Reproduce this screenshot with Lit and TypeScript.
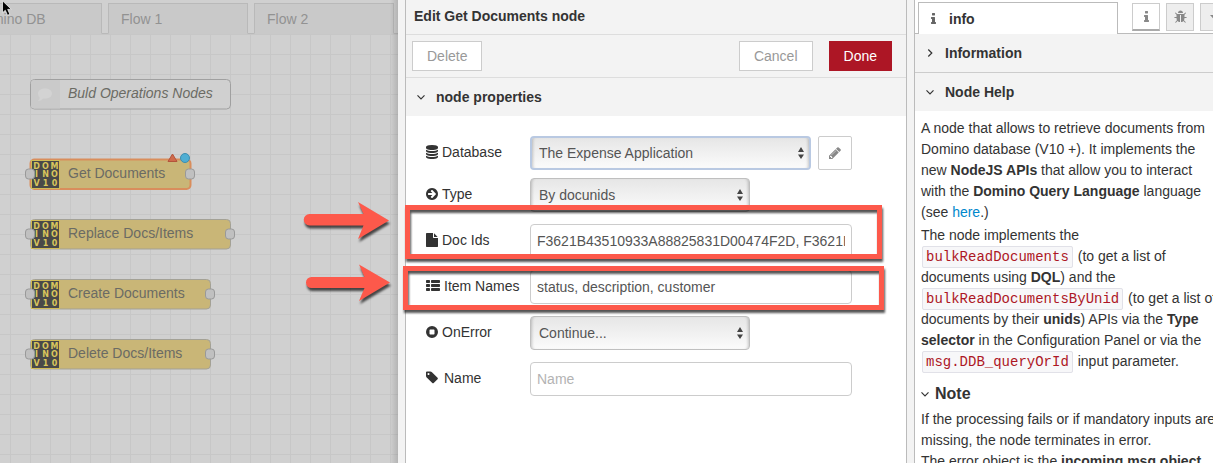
import { LitElement, html, css, svg } from "lit";
import { customElement } from "lit/decorators.js";

const ICONS: Record<string, { w: number; h: number; vb: string; body: unknown }> = {
  database: {
    w: 12, h: 14, vb: "0 0 1536 1792",
    body: svg`<path d="M768 768q237 0 443-43t325-127v170q0 69-103 128t-280 93.5-385 34.5-385-34.5-280-93.5-103-128v-170q119 84 325 127t443 43zm0 768q237 0 443-43t325-127v170q0 69-103 128t-280 93.5-385 34.5-385-34.5-280-93.5-103-128v-170q119 84 325 127t443 43zm0-384q237 0 443-43t325-127v170q0 69-103 128t-280 93.5-385 34.5-385-34.5-280-93.5-103-128v-170q119 84 325 127t443 43zm0-1152q208 0 385 34.5t280 93.5 103 128v128q0 69-103 128t-280 93.5-385 34.5-385-34.5-280-93.5-103-128v-128q0-69 103-128t280-93.5 385-34.5z"/>`,
  },
  arrow: {
    w: 12, h: 14, vb: "0 0 1536 1792",
    body: svg`<path d="M1285 896q0-27-18-45l-91-91-362-362q-18-18-45-18t-45 18l-91 91q-18 18-18 45t18 45l189 189h-502q-26 0-45 19t-19 45v128q0 26 19 45t45 19h502l-189 189q-19 19-19 45t19 45l91 91q18 18 45 18t45-18l362-362 91-91q18-18 18-45zm251 0q0 209-103 385.5t-279.5 279.5-385.5 103-385.5-103-279.5-279.5-103-385.5 103-385.5 279.5-279.5 385.5-103 385.5 103 279.5 279.5 103 385.5z"/>`,
  },
  file: {
    w: 12, h: 14, vb: "128 0 1536 1792",
    body: svg`<path d="M1152 512v-472q22 14 36 28l408 408q14 14 28 36h-472zm-128 32q0 40 28 68t68 28h544v1056q0 40-28 68t-68 28h-1344q-40 0-68-28t-28-68v-1600q0-40 28-68t68-28h800v544z"/>`,
  },
  list: {
    w: 14, h: 14, vb: "0 0 14 14",
    body: svg`
      <rect x="0" y="1" width="4" height="3" rx=".7"/><rect x="5" y="1" width="9" height="3" rx=".7"/>
      <rect x="0" y="5" width="4" height="3" rx=".7"/><rect x="5" y="5" width="9" height="3" rx=".7"/>
      <rect x="0" y="9" width="4" height="3" rx=".7"/><rect x="5" y="9" width="9" height="3" rx=".7"/>`,
  },
  stop: {
    w: 12, h: 14, vb: "0 0 12 14",
    body: svg`<path fill-rule="evenodd" d="M6 1a6 6 0 1 1 0 12A6 6 0 0 1 6 1zM4.200 4.500q-.7 0-.7.7v3.600q0 .7.7.7h3.600q.7 0 .7-.7V5.200q0-.7-.7-.7z"/>`,
  },
  tag: {
    w: 12, h: 14, vb: "0 64 1536 1792",
    body: svg`<path d="M448 448q0-53-37.500-90.500t-90.500-37.500-90.500 37.500-37.500 90.500 37.500 90.500 90.500 37.500 90.500-37.500 37.500-90.500zm1067 576q0 53-37 90l-491 492q-39 37-91 37-53 0-90-37l-715-716q-38-37-64.500-101t-26.500-117v-416q0-52 38-90t90-38h416q53 0 117 26.500t102 64.500l715 714q37 39 37 91z"/>`,
  },
  pencil: {
    w: 12, h: 14, vb: "0 0 1536 1792",
    body: svg`<path d="M363 1536l91-91-235-235-91 91v107h128v128h107zm523-928q0-22-22-22-10 0-17 7l-542 542q-7 7-7 17 0 22 22 22 10 0 17-7l542-542q7-7 7-17zm-54-192l416 416-832 832h-416v-416zm683 96q0 53-37 90l-166 166-416-416 166-165q36-38 90-38 53 0 91 38l235 234q37 39 37 91z"/>`,
  },
  info: {
    w: 5, h: 14, vb: "0 0 640 1792",
    body: svg`<path d="M640 1344v128q0 26-19 45t-45 19h-512q-26 0-45-19t-19-45v-128q0-26 19-45t45-19h64v-384h-64q-26 0-45-19t-19-45v-128q0-26 19-45t45-19h384q26 0 45 19t19 45v576h64q26 0 45 19t19 45zm-128-1152v192q0 26-19 45t-45 19h-256q-26 0-45-19t-19-45v-192q0-26 19-45t45-19h256q26 0 45 19t19 45z"/>`,
  },
  bug: {
    w: 13, h: 14, vb: "0 0 1664 1792",
    body: svg`<path d="M1632 960q0 26-19 45t-45 19h-224q0 171-67 290l208 209q19 19 19 45t-19 45q-18 19-45 19t-45-19l-198-197q-5 5-15 13t-42 28.500-65 36.500-82 29-97 13v-896h-128v896q-51 0-101.500-13.500t-87-33-66-39-43.500-32.500l-15-14-183 207q-20 21-48 21-24 0-43-16-19-18-20.500-44.500t15.500-46.500l202-227q-58-114-58-274h-224q-26 0-45-19t-19-45 19-45 45-19h224v-294l-173-173q-19-19-19-45t19-45 45-19 45 19l173 173h844l173-173q19-19 45-19t45 19 19 45-19 45l-173 173v294h224q26 0 45 19t19 45zm-480-576h-640q0-133 93.500-226.500t226.500-93.500 226.500 93.500 93.500 226.500z"/>`,
  },
  down: {
    w: 8, h: 8, vb: "0 0 8 8",
    body: svg`<path d="M.5 2.300 4 5.800 7.500 2.300" fill="none" stroke="currentColor" stroke-width="1.200"/>`,
  },
  right: {
    w: 8, h: 8, vb: "0 0 8 8",
    body: svg`<path d="M2.300 .5 5.800 4 2.300 7.500" fill="none" stroke="currentColor" stroke-width="1.200"/>`,
  },
  caret: {
    w: 9, h: 5, vb: "0 0 9 5",
    body: svg`<path d="M0 0h9L4.500 5z"/>`,
  },
  updown: {
    w: 6, h: 12, vb: "0 0 6 12",
    body: svg`<path d="M3 0 6 5H0zM3 12 0 7.500h6z"/>`,
  },
};

const icon = (name: string) => {
  const i = ICONS[name];
  return html`<svg class="icon" width=${i.w} height=${i.h} viewBox=${i.vb} fill="currentColor" aria-hidden="true">${i.body}</svg>`;
};

const shared = css`
  * { box-sizing: border-box; }
  .icon { display: block; flex: none; }
  button { font: inherit; cursor: pointer; }
  .section {
    display: flex; align-items: center; gap: 11px; width: 100%; height: 38px;
    padding: 0 0 0 11px; border: 0; background: #f3f3f3; color: #333;
    font-weight: bold; text-align: left;
  }
`;

interface FlowNode { label: string; x: number; y: number; width: number; selected?: boolean; }

@customElement("flow-workspace")
export class FlowWorkspace extends LitElement {
  static styles = [shared, css`
    :host { display: flex; flex-direction: column; position: relative; overflow: hidden; background: #d0d0d0; }
    .tabs { display: flex; gap: 6px; height: 34px; padding-top: 3px; margin-left: -39px; color: #929292; flex: none;
      background: linear-gradient(#b9b9b9, #b9b9b9) 0 33px / 100% 1px no-repeat; }
    .tab { flex: none; width: 140px; padding: 0 0 0 12px; border: 1px solid #b9b9b9; border-bottom-color: #c9c9c9;
      background: #c9c9c9; color: inherit; text-align: left; }
    .tab:first-child { width: 141px; }
    .canvas { flex: 1; width: 100%; min-height: 0; display: block; }
    .canvas text { font-size: 14px; fill: #6b6b64; }
    .canvas .letters { font-size: 8px; font-weight: bold; fill: #d8c55c; text-anchor: middle; font-family: "DejaVu Sans", sans-serif; }
    .comment { font-style: italic; }
    .shade { position: absolute; top: 0; right: 0; bottom: 0; width: 8px; background: linear-gradient(to right, #0000, #0002); }
    .pointer { position: absolute; left: 1px; top: 0; }
  `];

  nodes: FlowNode[] = [
    { label: "Get Documents", x: 30, y: 125, width: 160, selected: true },
    { label: "Replace Docs/Items", x: 30, y: 185, width: 200 },
    { label: "Create Documents", x: 30, y: 245, width: 180 },
    { label: "Delete Docs/Items", x: 30, y: 305, width: 180 },
  ];

  node(n: FlowNode) {
    const port = (x: number) => svg`<rect x=${x} y="10" width="9" height="10" rx="3" fill="#c0c0c0" stroke="#999"/>`;
    return svg`<g transform="translate(${n.x} ${n.y})">
      <rect x=".5" y=".5" width=${n.width} height="29.500" rx="4" fill="#c9b677" stroke=${n.selected ? "#d98d5c" : "#a3a196"} stroke-width=${n.selected ? 2 : 1}/>
      <rect x="1" y="1" width="29" height="29" fill="#d0bb55"/>
      <rect x="2" y="2" width="27" height="27" fill="#494949"/>
      <text class="letters" x="6.500 15.500 24.500" y="10">DOM</text>
      <text class="letters" x="6.500 15.500 24.500" y="18">INO</text>
      <text class="letters" x="6.500 15.500 24.500" y="27">V10</text>
      <text x="38" y="19">${n.label}</text>
      ${port(-4.5)}${port(n.width - 4.5)}
      ${n.selected ? svg`
        <path d="M142.500-5 147 2.500h-9z" fill="#cf6a4b" stroke="#b3543b" stroke-linejoin="round"/>
        <circle cx="155" cy="-1" r="4.500" fill="#4faed3" stroke="#3c8eb0"/>` : ""}
    </g>`;
  }

  render() {
    return html`
      <nav class="tabs">
        <button class="tab">Domino DB</button>
        <button class="tab">Flow 1</button>
        <button class="tab">Flow 2</button>
        <button class="tab" aria-label="Flow 3"></button>
      </nav>
      <svg class="canvas">
        <defs><pattern id="grid" x="10" width="20" height="20" patternUnits="userSpaceOnUse">
          <path d="M.5 0v20M0 .5h20" stroke="#c7c7c7" fill="none"/></pattern></defs>
        <rect width="100%" height="100%" fill="url(#grid)"/>
        <g transform="translate(30 45)">
          <rect x=".5" y=".5" width="200" height="29.500" rx="4" fill="#d0d0d0" stroke="#a0a0a0"/>
          <path d="M1 4Q1 1 4 1H30V29.500H4Q1 29.500 1 27z" fill="#cacaca"/>
          <path d="M15 9.500c4 0 7 2 7 5s-3 5-7 5l-2 0q-2 2.500-5 2.500 1.700-1.500 1.700-3.500Q8 17 8 14.500c0-3 3-5 7-5z" fill="#d3d3d3"/>
          <text class="comment" x="38" y="19">Buld Operations Nodes</text>
        </g>
        ${this.nodes.map((n) => this.node(n))}
      </svg>
      <div class="shade"></div>
      <svg class="pointer" width="12" height="18" viewBox="0 0 12 18">
        <path d="M1.500 .8v12l2.800-2.500 2.200 5 2.400-1-2.200-4.900h3.700z" fill="#000" stroke="#eee" stroke-width=".8"/>
      </svg>`;
  }
}

@customElement("edit-tray")
export class EditTray extends LitElement {
  static styles = [shared, css`
    :host { display: flex; flex-direction: column; position: relative; z-index: 1; background: #fff;
      border: solid #bbb; border-width: 0 1px; }
    .title { margin: 0; height: 35px; padding: 0 8px; border-bottom: 1px solid #ddd; background: #f3f3f3;
      font-size: 14px; line-height: 33px; }
    .toolbar { display: flex; align-items: center; gap: 16px; height: 43px; padding: 0 14px 0 6px;
      border-bottom: 1px solid #ddd; background: #f3f3f3; }
    .btn { height: 30px; padding: 0 14px; border: 1px solid #ccc; background: #fff; color: #999; }
    .first { margin-right: auto; }
    .primary { border-color: #ad1625; background: #ad1625; color: #fff; }
    .form { display: flex; flex-direction: column; gap: 12px; padding: 20px 54px 20px 20px; }
    .row { display: grid; grid-template-columns: 104px 1fr; align-items: center; height: 34px; }
    .row.tight { margin-top: -4px; }
    .label { display: flex; align-items: center; gap: 4px; padding-bottom: 2px; }
    .label.wide { gap: 6px; }
    .field { display: flex; gap: 7px; }
    .input { width: 100%; height: 34px; padding: 0 6px; border: 1px solid #ccc; border-radius: 4px;
      background: #fff; color: #555; font: inherit; outline: 0; }
    .input::placeholder { color: #b3b3b3; opacity: 1; }
    .picker { display: grid; width: 220px; align-items: center; }
    .picker > * { grid-area: 1 / 1; }
    .picker .icon { justify-self: end; margin-right: 7px; color: #444; pointer-events: none; }
    .select { appearance: none; width: 100%; height: 34px; padding: 0 8px; border: 1px solid #bfbfbf; border-radius: 4px;
      background: linear-gradient(#e6e6e6, #fbfbfb); box-shadow: inset 3px 0 3px -2px #0003, inset -3px 0 3px -2px #0003;
      color: #555; font: inherit; outline: 0; }
    .picker.grow { flex: 1; }
    .grow .select { border: 2px solid #b9c9e2; padding: 0 7px; }
    .edit { display: grid; place-items: center; width: 34px; height: 34px; padding: 0; border: 1px solid #ccc;
      background: #fff; color: #888; border-radius: 2px; }
    .marks { position: absolute; left: 0; top: 0; width: 1px; height: 1px; overflow: visible; pointer-events: none;
      filter: drop-shadow(1px 3px 1px #000a); }
  `];

  picker(id: string, value: string, grow = false) {
    return html`<span class="picker ${grow ? "grow" : ""}">
      <select class="select" id=${id}><option>${value}</option></select>${icon("updown")}</span>`;
  }

  render() {
    return html`
      <h2 class="title">Edit Get Documents node</h2>
      <div class="toolbar">
        <button class="btn first">Delete</button>
        <button class="btn">Cancel</button>
        <button class="btn primary">Done</button>
      </div>
      <button class="section" aria-expanded="true">${icon("down")}node properties</button>
      <form class="form">
        <div class="row"><label class="label" for="db">${icon("database")}Database</label>
          <div class="field">${this.picker("db", "The Expense Application", true)}
            <button class="edit" type="button" aria-label="Edit">${icon("pencil")}</button></div></div>
        <div class="row tight"><label class="label" for="type">${icon("arrow")}Type</label>${this.picker("type", "By docunids")}</div>
        <div class="row"><label class="label" for="ids">${icon("file")}Doc Ids</label>
          <input class="input" id="ids" .value=${"F3621B43510933A88825831D00474F2D, F3621B43510933A88825831D00474F2E"}></div>
        <div class="row"><label class="label" for="items">${icon("list")}Item Names</label>
          <input class="input" id="items" .value=${"status, description, customer"}></div>
        <div class="row"><label class="label" for="err">${icon("stop")}OnError</label>${this.picker("err", "Continue...")}</div>
        <div class="row"><label class="label wide" for="name">${icon("tag")}Name</label>
          <input class="input" id="name" placeholder="Name"></div>
      </form>
      <svg class="marks" aria-hidden="true">
        <g fill="none" stroke="#fd594b" stroke-width="5">
          <rect x="1.500" y="207.500" width="472" height="49"/>
          <rect x="-.5" y="268.500" width="476" height="39"/>
        </g>
        <g fill="#fd594b">
          <path d="M-96.500 214H-42.500L-48 202-17 220.500-48 239-42.500 225.500H-96.500a5.700 5.700 0 0 1 0-11.500z"/>
          <path d="M-94.500 277H-41.500L-47 264.500-16 282.500-47 301-41.500 288H-94.500a5.500 5.500 0 0 1 0-11z"/>
        </g>
      </svg>`;
  }
}

@customElement("info-sidebar")
export class InfoSidebar extends LitElement {
  static styles = [shared, css`
    :host { display: block; overflow: hidden; border-left: 1px solid #bbb; background: #fff; }
    .inner { width: 320px; }
    .tabs { display: flex; align-items: flex-start; height: 34px; padding: 2px 0 0 3px;
      background: linear-gradient(#bbb, #bbb) 0 33px / 100% 1px no-repeat; }
    .tab { display: flex; align-items: center; gap: 13px; width: 200px; height: 32px; padding: 0 0 0 12px; margin-right: 14px;
      border: 1px solid #bbb; border-bottom: 0; background: #fff; color: #333; font-weight: bold; }
    .tab .icon { color: #666; }
    .tool { display: grid; place-items: center; width: 28px; height: 28px; padding: 0; margin: 1px 6px 0 0;
      border: 1px solid #ccc; background: #eee; color: #888; }
    .active { border-bottom: 2px solid #aaa; background: #fff; }
    .rule { border-bottom: 1px solid #ccc; height: 39px; }
    .help { padding: 7px 12px 0 6px; line-height: 21px; }
    .text { margin: 0 0 2px; }
    .code { padding: 2px 3px; margin: 0 1px; border: 1px solid #e1e1e8; border-radius: 2px; background: #f7f7f9;
      color: #ad1625; font: 14px "Liberation Mono", monospace; white-space: nowrap; }
    .link { color: #0088cc; text-decoration: none; }
    .heading { display: flex; align-items: center; gap: 6px; margin: 12px 0 5px; font-size: 16px; line-height: 20px; }
  `];

  render() {
    return html`<div class="inner">
      <div class="tabs">
        <button class="tab">${icon("info")}info</button>
        <button class="tool active" aria-label="Info">${icon("info")}</button>
        <button class="tool" aria-label="Debug">${icon("bug")}</button>
        <button class="tool" aria-label="More">${icon("caret")}</button>
      </div>
      <button class="section rule" aria-expanded="false">${icon("right")}Information</button>
      <button class="section" aria-expanded="true">${icon("down")}Node Help</button>
      <div class="help">
        <p class="text">A node that allows to retrieve documents from Domino database (V10 +). It implements the new <b>NodeJS APIs</b> that allow you to interact<br>with the <b>Domino Query Language</b> language<br>(see <a class="link" href="#">here</a>.)</p>
        <p class="text">The node implements the <code class="code">bulkReadDocuments</code> (to get a list of documents using <b>DQL</b>) and the <code class="code">bulkReadDocumentsByUnid</code> (to get a list of documents by their <b>unids</b>) APIs via the <b>Type selector</b> in the Configuration Panel or via the <code class="code">msg.DDB_queryOrId</code> input parameter.</p>
        <h3 class="heading">${icon("down")}Note</h3>
        <p class="text">If the processing fails or if mandatory inputs are missing, the node terminates in error.<br>The error object is the <b>incoming msg object</b></p>
      </div>
    </div>`;
  }
}

@customElement("app-root")
export class AppRoot extends LitElement {
  static styles = css`
    :host { display: flex; height: 100vh; overflow: hidden; background: #f3f3f3; color: #333;
      font: 14px "Liberation Sans", Arial, sans-serif; }
    .workspace { flex: 1; min-width: 0; }
    .tray { flex: 0 0 502px; margin: 0 7px; box-sizing: border-box; }
    .sidebar { flex: 0 0 299px; box-sizing: border-box; }
  `;

  render() {
    return html`<flow-workspace class="workspace"></flow-workspace>
      <edit-tray class="tray"></edit-tray>
      <info-sidebar class="sidebar"></info-sidebar>`;
  }
}
